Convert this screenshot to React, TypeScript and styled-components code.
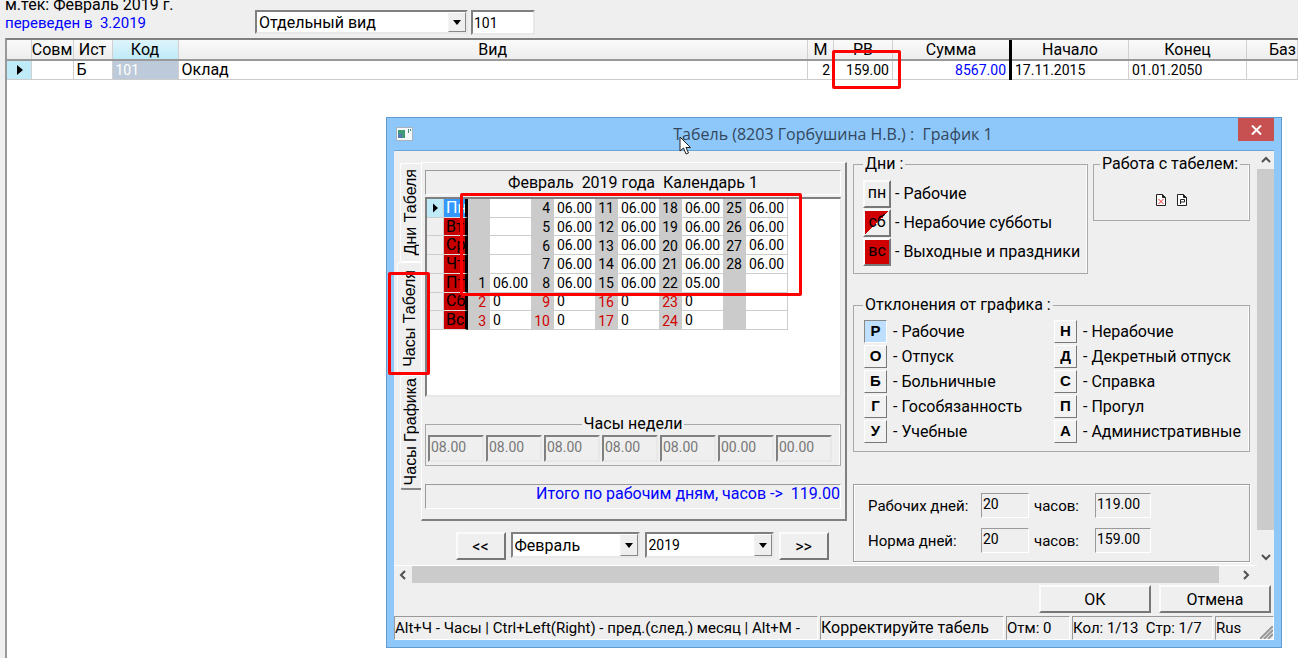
import React from "react";
import styled, { createGlobalStyle, css } from "styled-components";

const GlobalStyle = createGlobalStyle`
  *, *::before, *::after { box-sizing: border-box; }
  html, body { margin: 0; padding: 0; height: 100%; overflow: hidden; }
  #root { height: 100%; }
  body, button, input, select {
    font-family: Roboto, "Liberation Sans", sans-serif;
    font-size: 16px;
    color: #000;
  }
  body { line-height: 18px; background: #fff; }
`;

const face = "#efefef";
const blue = "#0000ff";

const sunken = css`
  border: 2px solid;
  border-color: #808080 #e8e8e8 #e8e8e8 #808080;
`;
const raised = css`
  border: 2px solid;
  border-color: #fbfbfb #777 #777 #fbfbfb;
`;
const thinSunken = css`
  border: 1px solid;
  border-color: #9a9a9a #fff #fff #9a9a9a;
`;

const Page = styled.div`
  position: relative;
  display: flex;
  flex-direction: column;
  min-height: 100%;
  overflow: hidden;
  border-left: 5px solid ${face};
`;

const TopBar = styled.header`
  display: flex;
  align-items: flex-start;
  height: 38px;
  background: ${face};
`;

const Period = styled.div`
  width: 250px;
  white-space: pre;
  margin-top: -4px;
`;

const Moved = styled.div`
  font-size: 15px;
  color: ${blue};
`;

const TopFields = styled.div`
  display: flex;
  gap: 3px;
  padding-top: 10px;
`;

const SelectBox = styled.div<{ $w: number; $h: number }>`
  position: relative;
  width: ${(p) => p.$w}px;
  height: ${(p) => p.$h}px;
  background: #fff;
  ${sunken}
`;

const Select = styled.select<{ $num?: boolean }>`
  appearance: none;
  width: 100%;
  height: 100%;
  border: 0;
  outline: 0;
  padding: 0 20px 0 2px;
  font-size: ${(p) => (p.$num ? 14 : 16)}px;
  background: transparent;
`;

const Arrow = styled.span`
  position: absolute;
  top: 0;
  right: 0;
  bottom: 0;
  width: 18px;
  display: flex;
  align-items: center;
  justify-content: center;
  background: ${face};
  border: 1px solid;
  border-color: #fff #888 #888 #f4f4f4;
  pointer-events: none;
`;

const CodeInput = styled.input`
  width: 64px;
  height: 25px;
  padding: 0 1px;
  font-size: 14px;
  background: #fff;
  ${sunken}
`;

const Records = styled.div`
  flex: 1;
  overflow: hidden;
  border-top: 2px solid #808080;
  border-left: 2px solid #999;
`;

const RecordTable = styled.table`
  width: 100%;
  table-layout: fixed;
  border-collapse: collapse;
  white-space: nowrap;
`;

const HeadCell = styled.th<{ $active?: boolean; $thick?: boolean; $left?: boolean }>`
  height: 20px;
  padding: ${(p) => (p.$left ? "0 0 0 22px" : "0")};
  overflow: hidden;
  text-align: ${(p) => (p.$left ? "left" : "center")};
  font-weight: 400;
  background: ${(p) => (p.$active ? "linear-gradient(#def4fb, #bfeaf8)" : "linear-gradient(#fafafa, #ededed)")};
  border-right: ${(p) => (p.$thick ? "3px solid #000" : "1px solid #d0d0d0")};
  border-bottom: 2px solid #999;
`;

const Cell = styled.td<{ $kind?: "marker" | "selected" | "sum"; $right?: boolean; $num?: boolean }>`
  height: 19px;
  padding: 0 3px;
  overflow: hidden;
  font-size: ${(p) => (p.$num ? 14 : 16)}px;
  text-align: ${(p) => (p.$right ? "right" : "left")};
  border-right: ${(p) => (p.$kind === "sum" ? "3px solid #000" : "1px solid #d0d0d0")};
  border-bottom: 1px solid #ccc;
  color: ${(p) => (p.$kind === "sum" ? blue : p.$kind === "selected" ? "#fff" : "#000")};
  background: ${(p) => (p.$kind === "marker" ? "#bfeaf8" : p.$kind === "selected" ? "#bccad9" : "#fff")};
`;

const Mark = styled.div<{ $top: number; $left: number; $w: number; $h: number }>`
  position: absolute;
  z-index: 3;
  top: ${(p) => p.$top}px;
  left: ${(p) => p.$left}px;
  width: ${(p) => p.$w}px;
  height: ${(p) => p.$h}px;
  border: 3px solid #f00;
  border-radius: 2px;
  pointer-events: none;
`;

const MarkRv = styled(Mark)`
  left: auto;
  right: ${(p) => p.$left}px;
`;

const Dialog = styled.section`
  position: absolute;
  top: 117px;
  left: 381px;
  right: 16px;
  display: flex;
  flex-direction: column;
  padding: 0 7px 7px;
  background: #8ec8fb;
  border: 1px solid #5f9ad0;
`;

const TitleBar = styled.header`
  position: relative;
  display: flex;
  align-items: center;
  height: 32px;
  white-space: pre;
`;

const Title = styled.h1`
  flex: 1;
  margin: 0;
  text-align: center;
  font: 400 16px/22px "Open Sans", "Noto Sans", sans-serif;
  color: #33475b;
`;

const CloseButton = styled.button`
  align-self: flex-start;
  display: flex;
  align-items: center;
  justify-content: center;
  width: 36px;
  height: 23px;
  padding: 0;
  border: 0;
  background: #c75050;
`;

const Pointer = styled.svg`
  position: absolute;
  z-index: 4;
  top: 18px;
  left: 285px;
`;

const Client = styled.div`
  display: flex;
  flex-direction: column;
  background: ${face};
  border-top: 1px solid #6ba5d8;
`;

const ScrollArea = styled.div`
  display: flex;
`;

const Content = styled.div`
  flex: 1;
  min-width: 0;
  display: flex;
  gap: 6px;
  padding: 4px 7px 3px 4px;
  border-bottom: 1px solid #fff;
`;

const VScroll = styled.div`
  width: 17px;
  display: flex;
  flex-direction: column;
`;

const HScroll = styled.div`
  display: flex;
  height: 17px;
  margin-right: 19px;
`;

const ScrollButton = styled.button`
  flex: none;
  display: flex;
  align-items: center;
  justify-content: center;
  width: 18px;
  height: 18px;
  padding: 0;
  border: 0;
  background: transparent;
`;

const Thumb = styled.div<{ $axis: "x" | "y" }>`
  flex: 1;
  background: #cbcbcb;
  margin: ${(p) => (p.$axis === "x" ? "0 18px 0 0" : "0 0 18px")};
`;

const LeftSide = styled.div`
  flex: 1;
  min-width: 0;
`;

const TabArea = styled.div`
  position: relative;
  display: flex;
  align-items: flex-start;
`;

const Tabs = styled.div`
  width: 23px;
  flex: none;
  display: flex;
  flex-direction: column;
  align-items: flex-end;
  padding-top: 8px;
`;

const Tab = styled.button<{ $active?: boolean; $h: number }>`
  width: ${(p) => (p.$active ? 24 : 21)}px;
  height: ${(p) => p.$h}px;
  display: flex;
  align-items: center;
  justify-content: center;
  padding: 0;
  background: ${face};
  border: solid #fff;
  border-width: 1px 0 1px 1px;
  border-radius: 3px 0 0 3px;
  &:last-child { border-bottom: 2px solid #888; }
`;

const TabText = styled.span`
  writing-mode: vertical-rl;
  transform: rotate(180deg);
  font: 400 16px/18px "Liberation Sans", sans-serif;
  white-space: nowrap;
`;

const TabPanel = styled.div`
  flex: 1;
  min-width: 0;
  display: flex;
  flex-direction: column;
  height: 359px;
  margin-top: 7px;
  padding: 7px 4px 0 3px;
  border: solid;
  border-width: 1px 2px 2px 1px;
  border-color: #fff #808080 #808080 #fff;
`;

const MonthTitle = styled.div`
  height: 25px;
  line-height: 24px;
  text-align: center;
  white-space: pre;
  ${thinSunken}
`;

const CalendarFrame = styled.div`
  position: relative;
  height: 200px;
  margin-top: 2px;
  background: #fff;
  ${sunken}
  border-right-width: 1px;
`;

const Calendar = styled.table`
  width: 361px;
  height: 131px;
  table-layout: fixed;
  border-collapse: separate;
  border-spacing: 0;
  font-size: 14px;
  line-height: 16px;
`;

const DayMarker = styled.td<{ $active?: boolean }>`
  padding: 0 0 0 6px;
  background: ${(p) => (p.$active ? "#bfeaf8" : face)};
  border-bottom: 1px solid #ccc;
`;

const DayName = styled.th<{ $active?: boolean }>`
  padding: 0 0 0 2px;
  overflow: hidden;
  text-align: left;
  white-space: nowrap;
  font-weight: 400;
  font-size: 16px;
  border-left: 1px solid #ccc;
  border-right: 3px solid #000;
  border-bottom: 1px solid #ddd;
  color: ${(p) => (p.$active ? "#fff" : "#000")};
  background: ${(p) => (p.$active ? "#3399ff" : "#c80000")};
`;

const DateCell = styled.td<{ $off?: boolean }>`
  padding: 0 4px 0 0;
  text-align: right;
  background: #cbcbcb;
  color: ${(p) => (p.$off ? "#d00000" : "#000")};
`;

const HoursCell = styled.td`
  padding: 0 0 0 3px;
  border: solid #ccc;
  border-width: 0 1px 1px 0;
`;

const Group = styled.fieldset`
  min-width: 0;
  margin: 0;
  padding: 0 2px;
  border: 1px solid #a8a8a8;
  box-shadow: inset -1px 0 #fff;
`;

const Legend = styled.legend<{ $center?: boolean }>`
  height: 18px;
  padding: 0 2px;
  white-space: pre;
  ${(p) => (p.$center ? "margin: 0 auto;" : "")}
`;

const WeekGroup = styled(Group)`
  height: 51px;
  margin-top: 18px;
`;

const WeekRow = styled.div`
  display: flex;
  gap: 2px;
  padding-top: 2px;
`;

const WeekInput = styled.input`
  width: 56px;
  height: 27px;
  padding: 0 1px 3px;
  font-size: 14px;
  background: ${face};
  &:disabled { color: #777; }
  ${sunken}
`;

const Total = styled.div`
  height: 25px;
  margin-top: 18px;
  line-height: 18px;
  text-align: right;
  white-space: pre;
  color: ${blue};
  ${thinSunken}
`;

const Nav = styled.div`
  display: flex;
  justify-content: center;
  gap: 5px;
  padding: 11px 0 0 39px;
`;

const PushButton = styled.button<{ $w: number }>`
  width: ${(p) => p.$w}px;
  height: 28px;
  padding: 0;
  background: ${face};
  ${raised}
`;

const RightSide = styled.div`
  width: 397px;
  flex: none;
  display: flex;
  flex-direction: column;
`;

const TopGroups = styled.div`
  display: flex;
  align-items: flex-start;
  justify-content: space-between;
`;

const DaysGroup = styled(Group)`
  width: 235px;
  height: 119px;
  padding-left: 9px;
`;

const DayList = styled.div`
  padding-top: 6px;
`;

const DayLine = styled.div`
  display: flex;
  align-items: center;
  gap: 4px;
  height: 29px;
  white-space: nowrap;
`;

const DayKey = styled.button<{ $fill: string }>`
  width: 28px;
  height: 28px;
  padding: 0 0 2px;
  background: ${(p) => p.$fill};
  ${raised}
`;

const WorkGroup = styled(Group)`
  width: 157px;
  height: 66px;
  padding-left: 6px;
`;

const Tools = styled.div`
  display: flex;
  justify-content: center;
  gap: 9px;
  padding: 19px 4px 0 0;
`;

const ToolButton = styled.button`
  width: 12px;
  height: 14px;
  padding: 0;
  border: 0;
  background: transparent;
`;

const DeviationGroup = styled(Group)`
  height: 156px;
  margin-top: 22px;
  padding-left: 9px;
`;

const DeviationGrid = styled.div`
  display: grid;
  grid-template-columns: 190px 1fr;
  grid-auto-rows: 25px;
  padding: 6px 0 0 1px;
`;

const DeviationItem = styled.div`
  display: flex;
  align-items: flex-start;
  gap: 6px;
  white-space: nowrap;
  line-height: 23px;
`;

const LetterKey = styled.button<{ $active?: boolean }>`
  width: 23px;
  height: 23px;
  padding: 0 0 2px;
  font: 700 15px/18px "Liberation Sans", sans-serif;
  background: ${(p) => (p.$active ? "#bfdfff" : "#f2f2f2")};
  border: 1px solid;
  border-color: ${(p) => (p.$active ? "#888 #fff #fff #888" : "#fff #777 #777 #fff")};
`;

const Summary = styled.div`
  display: grid;
  grid-template-columns: 113px 53px 61px 57px;
  align-items: center;
  align-content: start;
  row-gap: 10px;
  height: 78px;
  margin-top: 32px;
  padding: 8px 0 0 14px;
  border: 1px solid #a0a0a0;
  box-shadow: inset 1px 1px #fff, 1px 1px #fff;
`;

const SummaryLabel = styled.label`
  white-space: nowrap;
  font-size: 15px;
`;

const SummaryInput = styled.input<{ $w: number }>`
  width: ${(p) => p.$w}px;
  height: 25px;
  padding: 0 1px 4px;
  font-size: 14px;
  background: ${face};
  ${thinSunken}
`;

const Actions = styled.div`
  display: flex;
  justify-content: flex-end;
  gap: 8px;
  padding: 2px 3px 3px;
`;

const StatusBar = styled.footer`
  display: flex;
  gap: 2px;
  height: 24px;
`;

const StatusCell = styled.div<{ $w?: number; $small?: boolean }>`
  position: relative;
  ${(p) => (p.$w ? `flex: none; width: ${p.$w}px;` : "flex: 1; min-width: 0;")}
  font-size: ${(p) => (p.$small ? 15 : 16)}px;
  line-height: 22px;
  overflow: hidden;
  white-space: pre;
  ${thinSunken}
`;

const Grip = styled.svg`
  position: absolute;
  right: 0;
  bottom: 0;
`;

const MarkerIcon = () => (
  <svg width="6" height="10" viewBox="0 0 6 10">
    <path d="M0 0.500L5 5L0 9.500Z" fill="#000" />
  </svg>
);

const Chevron = ({ d }: { d: string }) => (
  <svg width="10" height="10" viewBox="0 0 10 10">
    <path d={d} fill="none" stroke="#505050" strokeWidth="2" />
  </svg>
);

function DropDown({ label, value, w, h, num }: { label: string; value: string; w: number; h: number; num?: boolean }) {
  return (
    <SelectBox $w={w} $h={h}>
      <Select aria-label={label} defaultValue={value} $num={num}>
        <option>{value}</option>
      </Select>
      <Arrow>
        <svg width="8" height="5" viewBox="0 0 8 5">
          <path d="M0 0H8L4 5Z" fill="#000" />
        </svg>
      </Arrow>
    </SelectBox>
  );
}

function SheetIcon({ children }: { children: React.ReactNode }) {
  return (
    <svg width="12" height="14" viewBox="0 0 12 14">
      <path d="M1.500 1.500H7.500L10.500 4.500V12.500H1.500Z" fill="#fff" stroke="#222" />
      <path d="M7.500 1.500V4.500H10.500Z" fill="#222" stroke="#222" />
      {children}
    </svg>
  );
}

const dayNames = ["Пн", "Вт", "Ср", "Чт", "Пт", "Сб", "Вс"];
const recordColumns = [24, 42, 39, 66, 0, 26, 59, 118, 118, 118, 51];
const weekHours = ["08.00", "08.00", "08.00", "08.00", "08.00", "00.00", "00.00"];
const deviations = [
  ["Р", "Рабочие"], ["Н", "Нерабочие"],
  ["О", "Отпуск"], ["Д", "Декретный отпуск"],
  ["Б", "Больничные"], ["С", "Справка"],
  ["Г", "Гособязанность"], ["П", "Прогул"],
  ["У", "Учебные"], ["А", "Административные"],
];
const dayKinds = [
  ["пн", "Рабочие", face],
  ["сб", "Нерабочие субботы", "linear-gradient(135deg, #d00000 50%, #efefef 50%)"],
  ["вс", "Выходные и праздники", "#d00000"],
];

function hoursFor(date: number, row: number) {
  if (date < 1 || date > 28) return "";
  if (row > 4) return "0";
  return date === 22 ? "05.00" : "06.00";
}

function MonthCalendar() {
  return (
    <Calendar>
      <colgroup>
        <col width="16" />
        <col width="25" />
        {[0, 1, 2, 3, 4].map((w) => (
          <React.Fragment key={w}>
            <col width="22" />
            <col width="42" />
          </React.Fragment>
        ))}
      </colgroup>
      <tbody>
        {dayNames.map((name, row) => (
          <tr key={name}>
            <DayMarker $active={row === 0}>{row === 0 && <MarkerIcon />}</DayMarker>
            <DayName scope="row" $active={row === 0}>{name}</DayName>
            {[0, 1, 2, 3, 4].map((week) => {
              const date = week * 7 + row - 3;
              return (
                <React.Fragment key={week}>
                  <DateCell $off={row > 4}>{date > 0 && date < 29 ? date : ""}</DateCell>
                  <HoursCell>{hoursFor(date, row)}</HoursCell>
                </React.Fragment>
              );
            })}
          </tr>
        ))}
      </tbody>
    </Calendar>
  );
}

export default function App() {
  return (
    <>
      <GlobalStyle />
      <Page>
        <TopBar>
          <Period>
            <div>м.тек: Февраль 2019 г.</div>
            <Moved>переведен в  3.2019</Moved>
          </Period>
          <TopFields>
            <DropDown label="Вид" value="Отдельный вид" w={213} h={24} />
            <CodeInput aria-label="Код" defaultValue="101" />
          </TopFields>
        </TopBar>

        <Records>
          <RecordTable>
            <colgroup>
              {recordColumns.map((w, i) => (w ? <col key={i} width={w} /> : <col key={i} />))}
            </colgroup>
            <thead>
              <tr>
                <HeadCell />
                <HeadCell>Совм</HeadCell>
                <HeadCell>Ист</HeadCell>
                <HeadCell $active>Код</HeadCell>
                <HeadCell>Вид</HeadCell>
                <HeadCell>М</HeadCell>
                <HeadCell>РВ</HeadCell>
                <HeadCell $thick>Сумма</HeadCell>
                <HeadCell>Начало</HeadCell>
                <HeadCell>Конец</HeadCell>
                <HeadCell $left>Баз</HeadCell>
              </tr>
            </thead>
            <tbody>
              <tr>
                <Cell $kind="marker">
                  <svg width="18" height="10" viewBox="0 0 18 10">
                    <path d="M7 0L13 5L7 10Z" />
                  </svg>
                </Cell>
                <Cell />
                <Cell>Б</Cell>
                <Cell $kind="selected" $num>101</Cell>
                <Cell>Оклад</Cell>
                <Cell $right $num>2</Cell>
                <Cell $right $num>159.00</Cell>
                <Cell $kind="sum" $right $num>8567.00</Cell>
                <Cell $num>17.11.2015</Cell>
                <Cell $num>01.01.2050</Cell>
                <Cell />
              </tr>
            </tbody>
          </RecordTable>
        </Records>
        <MarkRv $top={50} $left={397} $w={69} $h={39} />

        <Dialog role="dialog" aria-labelledby="dialog-title">
          <TitleBar>
            <svg width="34" height="16" viewBox="0 0 34 16">
              <rect x="2.500" y="1.500" width="16" height="13" fill="#f4f8fa" stroke="#a8b4bc" />
              <rect x="4" y="4" width="7" height="8" fill="#3f9a78" />
              <rect x="4" y="8" width="4" height="4" fill="#5577b0" />
              <path d="M14.500 3V7M16.500 3V5" stroke="#4a8a70" />
            </svg>
            <Title id="dialog-title">Табель (8203 Горбушина Н.В.) :  График 1</Title>
            <CloseButton aria-label="Закрыть">
              <svg width="11" height="10" viewBox="0 0 11 10">
                <path d="M1 0.500L10 9.500M10 0.500L1 9.500" stroke="#fff" strokeWidth="2" />
              </svg>
            </CloseButton>
            <Pointer width="13" height="20" viewBox="0 0 13 20">
              <path d="M1 1V15L4.500 12L7 18L9.500 17L7 11.500H11.500Z" fill="#fff" stroke="#222" />
            </Pointer>
          </TitleBar>

          <Client>
            <ScrollArea>
              <Content>
                <LeftSide>
                  <TabArea>
                    <Tabs role="tablist">
                      <Tab role="tab" $h={99}><TabText>Дни Табеля</TabText></Tab>
                      <Tab role="tab" $active aria-selected $h={113}><TabText>Часы Табеля</TabText></Tab>
                      <Tab role="tab" $h={115}><TabText>Часы Графика</TabText></Tab>
                    </Tabs>
                    <TabPanel role="tabpanel">
                      <MonthTitle>Февраль  2019 года  Календарь 1</MonthTitle>
                      <CalendarFrame>
                        <MonthCalendar />
                        <Mark $top={-6} $left={33} $w={342} $h={103} />
                      </CalendarFrame>
                      <WeekGroup>
                        <Legend $center>Часы недели</Legend>
                        <WeekRow>
                          {weekHours.map((h, i) => (
                            <WeekInput key={i} disabled aria-label={dayNames[i]} defaultValue={h} />
                          ))}
                        </WeekRow>
                      </WeekGroup>
                      <Total>Итого по рабочим дням, часов -&gt;  119.00</Total>
                    </TabPanel>
                    <Mark $top={117} $left={-10} $w={42} $h={103} />
                  </TabArea>
                  <Nav>
                    <PushButton $w={50}>&lt;&lt;</PushButton>
                    <DropDown label="Месяц" value="Февраль" w={129} h={26} />
                    <DropDown label="Год" value="2019" w={129} h={26} num />
                    <PushButton $w={50}>&gt;&gt;</PushButton>
                  </Nav>
                </LeftSide>

                <RightSide>
                  <TopGroups>
                    <DaysGroup>
                      <Legend>Дни :</Legend>
                      <DayList>
                        {dayKinds.map(([key, name, fill]) => (
                          <DayLine key={key}>
                            <DayKey $fill={fill}>{key}</DayKey>
                            <span>- {name}</span>
                          </DayLine>
                        ))}
                      </DayList>
                    </DaysGroup>
                    <WorkGroup>
                      <Legend>Работа с табелем:</Legend>
                      <Tools>
                        <ToolButton aria-label="Удалить">
                          <SheetIcon><path d="M3.500 6L8.500 11M8.500 6L3.500 11" stroke="#f03030" /></SheetIcon>
                        </ToolButton>
                        <ToolButton aria-label="Печать">
                          <SheetIcon><path d="M4.500 11V6.500H8.500V9H4.500" stroke="#222" fill="none" /></SheetIcon>
                        </ToolButton>
                      </Tools>
                    </WorkGroup>
                  </TopGroups>
                  <DeviationGroup>
                    <Legend>Отклонения от графика :</Legend>
                    <DeviationGrid>
                      {deviations.map(([key, name], i) => (
                        <DeviationItem key={key}>
                          <LetterKey $active={i === 0}>{key}</LetterKey>
                          <span>- {name}</span>
                        </DeviationItem>
                      ))}
                    </DeviationGrid>
                  </DeviationGroup>
                  <Summary>
                    <SummaryLabel htmlFor="work-days">Рабочих дней:</SummaryLabel>
                    <SummaryInput id="work-days" $w={48} defaultValue="20" />
                    <SummaryLabel htmlFor="work-hours">часов:</SummaryLabel>
                    <SummaryInput id="work-hours" $w={56} defaultValue="119.00" />
                    <SummaryLabel htmlFor="norm-days">Норма дней:</SummaryLabel>
                    <SummaryInput id="norm-days" $w={48} defaultValue="20" />
                    <SummaryLabel htmlFor="norm-hours">часов:</SummaryLabel>
                    <SummaryInput id="norm-hours" $w={56} defaultValue="159.00" />
                  </Summary>
                </RightSide>
              </Content>
              <VScroll>
                <ScrollButton aria-label="Вверх"><Chevron d="M1 7L5 3L9 7" /></ScrollButton>
                <Thumb $axis="y" />
                <ScrollButton aria-label="Вниз"><Chevron d="M1 3L5 7L9 3" /></ScrollButton>
              </VScroll>
            </ScrollArea>
            <HScroll>
              <ScrollButton aria-label="Влево"><Chevron d="M7 1L3 5L7 9" /></ScrollButton>
              <Thumb $axis="x" />
              <ScrollButton aria-label="Вправо"><Chevron d="M3 1L7 5L3 9" /></ScrollButton>
            </HScroll>
            <Actions>
              <PushButton $w={112}>ОК</PushButton>
              <PushButton $w={112}>Отмена</PushButton>
            </Actions>
            <StatusBar>
              <StatusCell $small>Alt+Ч - Часы | Ctrl+Left(Right) - пред.(след.) месяц | Alt+М -</StatusCell>
              <StatusCell $w={184}>Корректируйте табель</StatusCell>
              <StatusCell $w={64} $small>Отм: 0</StatusCell>
              <StatusCell $w={141} $small>Кол: 1/13  Стр: 1/7</StatusCell>
              <StatusCell $w={59} $small>
                Rus
                <Grip width="13" height="13" viewBox="0 0 13 13">
                  <path d="M0 13L13 0M4 13L13 4M8 13L13 8" stroke="#999" strokeWidth="2" />
                </Grip>
              </StatusCell>
            </StatusBar>
          </Client>
        </Dialog>
      </Page>
    </>
  );
}
